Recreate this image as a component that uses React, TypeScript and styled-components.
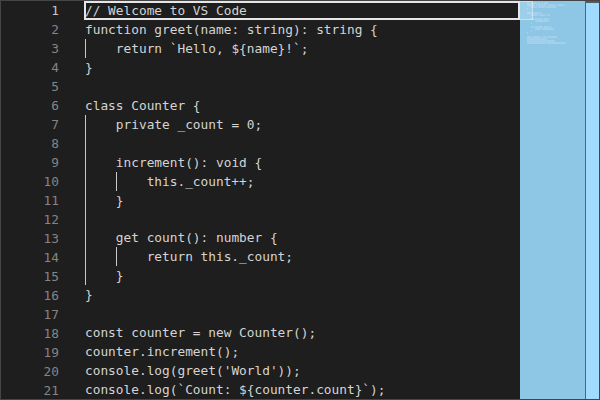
import React from "react";
import styled, { createGlobalStyle } from "styled-components";

const Global = createGlobalStyle`
  html, body { margin: 0; padding: 0; background: #1e1e1e; }
  #root { width: 600px; height: 400px; }
`;

type Line = { indent: number; text: string };

const LINES: Line[] = [
  { indent: 0, text: "// Welcome to VS Code" },
  { indent: 0, text: "function greet(name: string): string {" },
  { indent: 1, text: "return `Hello, ${name}!`;" },
  { indent: 0, text: "}" },
  { indent: 0, text: "" },
  { indent: 0, text: "class Counter {" },
  { indent: 1, text: "private _count = 0;" },
  { indent: 1, text: "" },
  { indent: 1, text: "increment(): void {" },
  { indent: 2, text: "this._count++;" },
  { indent: 1, text: "}" },
  { indent: 1, text: "" },
  { indent: 1, text: "get count(): number {" },
  { indent: 2, text: "return this._count;" },
  { indent: 1, text: "}" },
  { indent: 0, text: "}" },
  { indent: 0, text: "" },
  { indent: 0, text: "const counter = new Counter();" },
  { indent: 0, text: "counter.increment();" },
  { indent: 0, text: "console.log(greet('World'));" },
  { indent: 0, text: "console.log(`Count: ${counter.count}`);" },
];

const Frame = styled.div`
  box-sizing: border-box;
  width: 600px;
  height: 400px;
  border: 1px solid #454545;
  background: #1e1e1e;
  display: flex;
  overflow: hidden;
  font-family: "DejaVu Sans Mono", "Liberation Mono", monospace;
  font-size: 12.8px;
`;

const Gutter = styled.div`
  flex: none;
  width: 84px;
  box-sizing: border-box;
  padding-right: 26px;
  display: flex;
  flex-direction: column;
`;

const LineNumber = styled.div<{ $active?: boolean }>`
  height: 19px;
  line-height: 19px;
  text-align: right;
  color: ${(p) => (p.$active ? "#c6c6c6" : "#858585")};
`;

const CodeArea = styled.div`
  flex: 1;
  min-width: 0;
  display: flex;
  flex-direction: column;
`;

const CodeLine = styled.div<{ $active?: boolean }>`
  position: relative;
  height: 19px;
  line-height: 19px;
  display: flex;
  color: #d4d4d4;
  white-space: pre;
  &::after {
    content: "";
    display: ${(p) => (p.$active ? "block" : "none")};
    position: absolute;
    left: -1px;
    right: 0;
    top: 0;
    bottom: 0;
    border: 2px solid #e6e6e6;
    pointer-events: none;
  }
`;

const Indent = styled.span`
  flex: none;
  width: 4ch;
  box-sizing: border-box;
  border-left: 1px solid #c8c8c8;
`;

const Minimap = styled.div`
  position: relative;
  flex: none;
  width: 65px;
  background: #8ec7e6;
  border-right: 1px solid #3d6c8a;
`;

const MinimapSlider = styled.div`
  position: absolute;
  left: 0;
  top: 0;
  width: 13px;
  height: 19px;
  box-sizing: border-box;
  background: rgba(255, 255, 255, 0.14);
  border: 1px solid rgba(255, 255, 255, 0.4);
  border-left: none;
`;

const Scrollbar = styled.div`
  flex: none;
  width: 13px;
  background: #a0dbff;
  border-top: 2px solid #555a5e;
`;

function MinimapDrawing() {
  return (
    <svg width="65" height="60" viewBox="0 0 65 60">
      {LINES.map((l, i) => {
        const start = 7 + l.indent * 4;
        const rects: React.ReactNode[] = [];
        let run = -1;
        const t = l.text + " ";
        for (let c = 0; c < t.length; c++) {
          if (t[c] !== " " && run < 0) run = c;
          if (t[c] === " " && run >= 0) {
            rects.push(
              <rect
                key={c}
                x={start + run}
                y={1.5 + i * 2}
                width={c - run}
                height={1.2}
                fill="#b4d6ea"
              />
            );
            run = -1;
          }
        }
        return <g key={i}>{rects}</g>;
      })}
    </svg>
  );
}

export default function App() {
  return (
    <>
      <Global />
      <Frame>
        <Gutter>
          {LINES.map((_, i) => (
            <LineNumber key={i} $active={i === 0}>
              {i + 1}
            </LineNumber>
          ))}
        </Gutter>
        <CodeArea>
          {LINES.map((l, i) => (
            <CodeLine key={i} $active={i === 0}>
              {Array.from({ length: l.indent }).map((_, k) => (
                <Indent key={k} />
              ))}
              <span>{l.text}</span>
            </CodeLine>
          ))}
        </CodeArea>
        <Minimap>
          <MinimapDrawing />
          <MinimapSlider />
        </Minimap>
        <Scrollbar />
      </Frame>
    </>
  );
}
